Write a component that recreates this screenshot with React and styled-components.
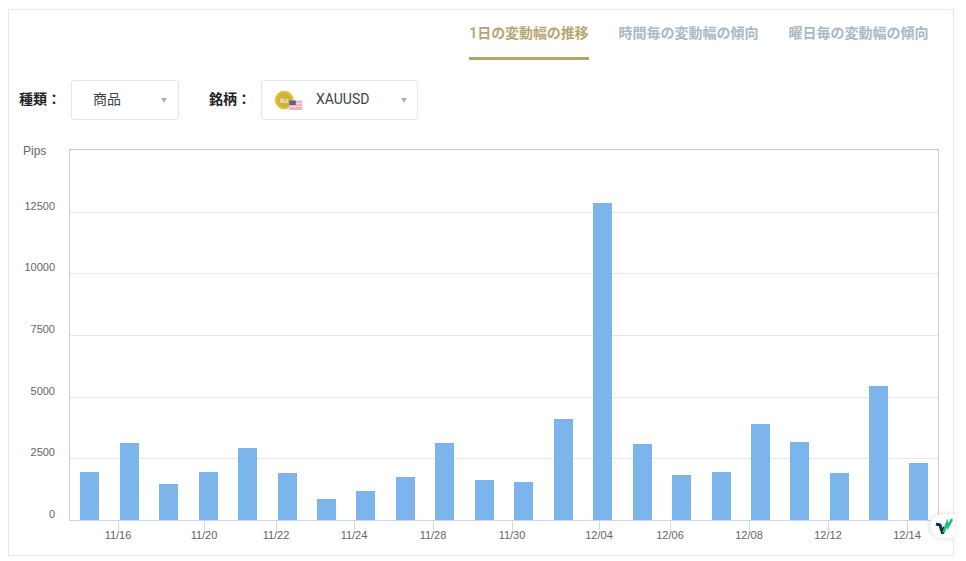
import styled, { createGlobalStyle } from 'styled-components';

const GlobalStyle = createGlobalStyle`
  html, body {
    margin: 0;
    padding: 0;
    background: #fff;
    font-family: Roboto, "Noto Sans CJK JP", sans-serif;
  }
`;

const Page = styled.div`
  width: 966px;
  height: 561px;
  padding: 9px 12px 5px 8px;
  box-sizing: border-box;
  overflow: hidden;
`;

const Card = styled.div`
  position: relative;
  height: 547px;
  box-sizing: border-box;
  border: 1px solid #e0e8e8;
`;

const Tabs = styled.div`
  display: flex;
  justify-content: flex-end;
  gap: 30px;
  height: 51px;
  padding-right: 24.5px;
`;

const Tab = styled.div`
  height: 50px;
  box-sizing: border-box;
  padding-top: 13px;
  font-size: 14px;
  line-height: 20px;
  font-weight: 700;
  white-space: nowrap;
  letter-spacing: ${(p) => (p.$active ? '-0.1px' : '0')};
  color: ${(p) => (p.$active ? '#b8a672' : '#a9b9c5')};
  border-bottom: 3px solid ${(p) => (p.$active ? '#b3a26c' : 'transparent')};
`;

const Filters = styled.div`
  display: flex;
  align-items: center;
  height: 40px;
  margin-top: 19px;
  padding-left: 10px;
`;

const Label = styled.div`
  width: 52px;
  margin-top: -3px;
  font-size: 14px;
  line-height: 20px;
  font-weight: 700;
  color: #222;
  white-space: nowrap;
`;

const Select = styled.div`
  display: flex;
  align-items: center;
  width: ${(p) => p.$width}px;
  height: 40px;
  box-sizing: border-box;
  margin-right: 30px;
  padding: 0 ${(p) => p.$padRight}px 0 ${(p) => p.$pad}px;
  border: 1px solid #e0e8e8;
  border-radius: 3px;
  font-size: 14px;
  line-height: 20px;
  color: #3a4450;
`;

const SelectText = styled.span`
  flex: 1;
  margin-top: -3px;
`;

const Caret = styled.span`
  width: 0;
  height: 0;
  border-left: 3.5px solid transparent;
  border-right: 3.5px solid transparent;
  border-top: 5px solid #a3b2bd;
`;

const CoinIcon = styled.svg`
  width: 28px;
  height: 20px;
  margin-right: 13px;
  flex-shrink: 0;
`;

const Chart = styled.svg`
  display: block;
  width: 944px;
  height: 415px;
  margin-top: 20px;
`;

const AxisText = styled.text`
  font-family: "Liberation Sans", Arial, sans-serif;
  font-size: ${(p) => p.$size || 11}px;
  fill: #666;
`;

const Badge = styled.div`
  position: absolute;
  right: -2px;
  bottom: 17px;
  width: 25px;
  height: 24px;
  display: flex;
  align-items: center;
  padding-left: 5px;
  box-sizing: border-box;
  background: #fff;
  border-radius: 12px 0 0 12px;
  box-shadow: -1px 0 5px rgba(0, 0, 0, 0.14);
`;

const tabs = ['1日の変動幅の推移', '時間毎の変動幅の傾向', '曜日毎の変動幅の傾向'];

const barTops = [472, 443, 484, 472, 448, 473, 499, 491, 477, 443, 480, 482, 419, 203, 444, 475, 472, 424, 442, 473, 386, 463];

const yLabels = [
  ['12500', 206],
  ['10000', 267],
  ['7500', 329],
  ['5000', 391],
  ['2500', 452],
  ['0', 514],
];

const gridLines = [212, 273, 335, 397, 458];

const xTicks = [
  ['11/16', 118],
  ['11/20', 204],
  ['11/22', 276],
  ['11/24', 354],
  ['11/28', 433],
  ['11/30', 512],
  ['12/04', 599],
  ['12/06', 670],
  ['12/08', 749],
  ['12/12', 828],
  ['12/14', 907],
];

// chart svg starts at page x=9, y=140
const OX = 9;
const OY = 140;

const App = () => {
  return (
    <Page>
      <GlobalStyle />
      <Card>
        <Tabs>
          {tabs.map((t, i) => (
            <Tab key={t} $active={i === 0}>
              {t}
            </Tab>
          ))}
        </Tabs>
        <Filters>
          <Label>種類：</Label>
          <Select $width={108} $pad={21} $padRight={11}>
            <SelectText>商品</SelectText>
            <Caret />
          </Select>
          <Label>銘柄：</Label>
          <Select $width={157} $pad={13} $padRight={10}>
            <CoinIcon viewBox="0 0 28 20">
              <circle cx="9.3" cy="10" r="9.3" fill="#e4bc2e" />
              <circle cx="9.3" cy="10" r="7" fill="#cfb23c" />
              <text x="8.8" y="12.5" fontSize="7" fontWeight="700" fill="#efe6bd" textAnchor="middle" fontFamily="Roboto, sans-serif">Au</text>
              <rect x="14.3" y="10.5" width="13" height="9.5" fill="#ecb6bc" />
              <rect x="14.3" y="13" width="13" height="1" fill="#f6dde0" />
              <rect x="14.3" y="16" width="13" height="1" fill="#f6dde0" />
              <rect x="14.3" y="10.5" width="6.5" height="4.5" fill="#5b6296" />
            </CoinIcon>
            <SelectText>XAUUSD</SelectText>
            <Caret />
          </Select>
        </Filters>
        <Chart viewBox="0 0 944 415">
          <AxisText $size={12} x={23 - OX} y={155 - OY}>Pips</AxisText>
          {gridLines.map((y) => (
            <line key={y} x1={69 - OX} x2={939 - OX} y1={y - OY + 0.5} y2={y - OY + 0.5} stroke="#e2e7ea" />
          ))}
          <rect x={69 - OX + 0.5} y={149 - OY + 0.5} width={869} height={371} fill="none" stroke="#c9cccf" />
          {barTops.map((top, i) => (
            <rect key={i} x={Math.round(80.3 + i * 39.45) - OX} y={top - OY} width={19} height={520 - top} fill="#7cb5ec" />
          ))}
          <line x1={69 - OX} x2={939 - OX} y1={520 - OY + 0.5} y2={520 - OY + 0.5} stroke="#ccd6eb" />
          {yLabels.map(([text, y]) => (
            <AxisText key={text} x={55 - OX} y={y - OY + 4} textAnchor="end">
              {text}
            </AxisText>
          ))}
          {xTicks.map(([text, x]) => (
            <g key={text}>
              <line x1={x - OX + 0.5} x2={x - OX + 0.5} y1={520 - OY} y2={530 - OY} stroke="#ccd6eb" />
              <AxisText x={x - OX} y={539 - OY} textAnchor="middle">
                {text}
              </AxisText>
            </g>
          ))}
        </Chart>
        <Badge>
          <svg width="18" height="16" viewBox="0 0 18 16" fill="none">
            <path d="M1 6 L5 7 L7.5 15 L9.5 9" stroke="#12294b" strokeWidth="3" />
            <path d="M8.5 14.5 L12 5 L13 8.5 L17 1" stroke="#17c37b" strokeWidth="2.6" />
          </svg>
        </Badge>
      </Card>
    </Page>
  );
};

export default App;
